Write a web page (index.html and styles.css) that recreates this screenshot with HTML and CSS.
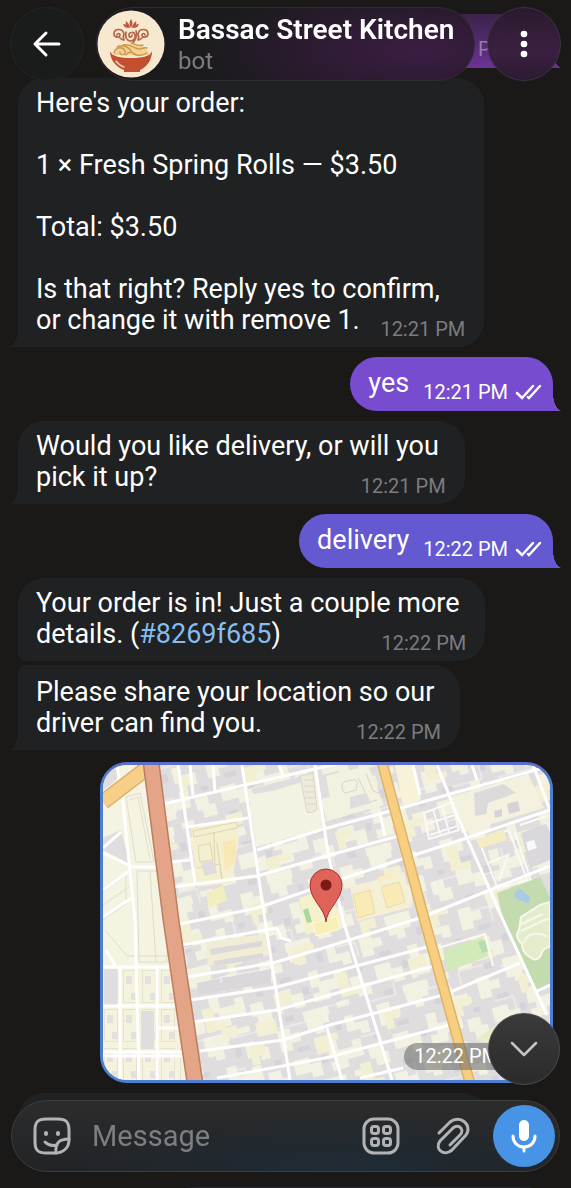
FILE: index.html
```html
<!DOCTYPE html>
<html lang="en">
  <head>
    <meta charset="UTF-8" />
    <meta name="viewport" content="width=device-width, initial-scale=1.0" />
    <title>Bassac Street Kitchen</title>
    <link rel="stylesheet" href="styles.css">
  </head>
  <body>
    <header class="top-bar">
      <button class="round-btn" type="button" aria-label="Back">
        <svg width="30" height="28" viewBox="0 0 30 28" fill="none" stroke="#fff" stroke-width="3" stroke-linecap="round" stroke-linejoin="round">
          <path d="M27 14H3M14 3L3 14l11 11" />
        </svg>
      </button>
      <div class="chat-pill">
        <svg class="avatar" viewBox="0 0 68 68" fill="none" stroke-linecap="round">
          <circle cx="34" cy="34" r="33.500" fill="#f6e9cf" />
          <!-- lotus -->
          <path d="M34 18c-2-3-2-6 0-9c2 3 2 6 0 9zM33 18c-3-1-5-3-4-7c2 2 4 4 4 7zM35 18c3-1 5-3 4-7c-2 2-4 4-4 7zM32 18c-3 0-5-1-6-4c3 0 5 2 6 4zM36 18c3 0 5-1 6-4c-3 0-5 2-6 4z" fill="#c2573a" />
          <!-- steam -->
          <g stroke="#b9654a" stroke-width="1.700">
            <path d="M27 30c-1-2-1-4 0-6c-1-6-10-6-10 0c0 4 6 4 6 1c0-2-3-2-3 0M27 30c-2 0-3-1-4-2" />
            <path d="M41 30c1-2 1-4 0-6c1-6 10-6 10 0c0 4-6 4-6 1c0-2 3-2 3 0M41 30c2 0 3-1 4-2" />
            <path d="M29 22c-1 5 0 8 4 9c4 0 6-3 5-6c-1-4-7-3-6 1c1 2 3 1 3-1M39 21c2 4 0 8-3 12" />
          </g>
          <!-- noodles -->
          <path d="M17 45c0-8 7-11 16-11s18 3 19 11z" fill="#f0d297" />
          <g stroke="#cf9849" stroke-width="1.400">
            <path d="M17 43c1-6 9-7 11-2s-6 5-5 1M20 37c6-3 12 0 15 5s10 4 15 1M26 35c8-2 12 5 17 4s5-2 7-1M34 33c4 1 8 4 12 2M29 45c3-5 8-2 11 0" />
          </g>
          <!-- bowl -->
          <path d="M13 41c2 6 11 7 21 7s19-1 21-7c0 9-5 16-12 19v2H27v-2c-8-3-14-10-14-19z" fill="#c34f31" />
          <path d="M19 51c2 3 5 5 8 6" stroke="#f0c9a6" stroke-width="1.500" />
        </svg>
        <div class="chat-name">
          <h1>Bassac Street Kitchen</h1>
          <p>bot</p>
        </div>
      </div>
      <button class="round-btn more-btn" type="button" aria-label="More options">
        <svg width="8" height="28" viewBox="0 0 8 28" fill="#fff">
          <circle cx="4" cy="4" r="3.300" /><circle cx="4" cy="14" r="3.300" /><circle cx="4" cy="24" r="3.300" />
        </svg>
      </button>
    </header>

    <main class="chat">
      <div class="bubble out tail first"><time>PM <svg class="ticks" viewBox="0 0 28 16"><path d="M2 9l5 5L18 2M13 13l1 1L25 2" /></svg></time></div>

      <div class="bubble in tail">Here's your order:<br><br>1 × Fresh Spring Rolls — $3.50<br><br>Total: $3.50<br><br>Is that right? Reply yes to confirm,<br>or change it with remove 1.&nbsp;<time>12:21 PM</time></div>

      <div class="bubble out tail violet">yes <time>12:21 PM <svg class="ticks" viewBox="0 0 28 16"><path d="M2 9l5 5L18 2M13 13l1 1L25 2" /></svg></time></div>

      <div class="bubble in tail">Would you like delivery, or will you&nbsp;<br>pick it up? <time>12:21 PM</time></div>

      <div class="bubble out tail indigo">delivery <time>12:22 PM <svg class="ticks" viewBox="0 0 28 16"><path d="M2 9l5 5L18 2M13 13l1 1L25 2" /></svg></time></div>

      <div class="bubble in">Your order is in! Just a couple more&nbsp;<br>details. (<a href="#8269f685">#8269f685</a>) <time>12:22 PM</time></div>

      <div class="bubble in tail joined">Please share your location so our&nbsp;<br>driver can find you. <time>12:22 PM</time></div>

      <div class="location">
        <svg class="map" viewBox="103 765 447 315" preserveAspectRatio="xMidYMid slice" role="img" aria-label="Shared location">
          <defs>
            <pattern id="blocks" width="103" height="71" patternUnits="userSpaceOnUse" patternTransform="rotate(-15)">
              <rect width="103" height="71" fill="#e0dddf" />
              <path d="M0 3h13v6h9v9H12v7H0zM31 0h23v7h-7v9h-9v-5h-7zM69 6h9v9h13v12h-9v-5H69zM8 36h16v7h11v14H24v-6H8zM45 25h10v12h15v-6h9v17H62v8H45v-9h7v-6h-7zM84 41h13v9h6v12H89v-8h-5zM30 62h26v9H30zM65 61h13v6H65z" fill="#f3f1e2" />
              <path d="M16 24h12v5H16zM58 9h6v9h-6zM36 38h6v8h-6zM93 31h7v5h-7zM11 62h9v6h-9z" fill="#d6d4d9" />
            </pattern>
            <pattern id="yards" width="139" height="93" patternUnits="userSpaceOnUse" patternTransform="rotate(-15)">
              <path d="M6 9h17v12H12v8H6zM72 5h11v18h9v6H72zM108 53h16v10h-8v9h-8zM34 61h24v7H47v10H34z" fill="#f3efd2" />
              <path d="M2 43h38v11M52 48v-14h26M94 40h31v-22M80 72h19v15" fill="none" stroke="#f6f5ef" />
            </pattern>
            <pattern id="lots" width="19" height="39" patternUnits="userSpaceOnUse" patternTransform="translate(101 967)">
              <rect width="19" height="39" fill="#f5f2de" />
              <path d="M6 9h6v8H6zM11 26h5v7h-5z" fill="#e4e0dd" />
              <rect x="3.500" y="3.500" width="13" height="32" fill="none" stroke="#e7e2d0" />
            </pattern>
          </defs>

          <rect x="103" y="765" width="447" height="315" fill="url(#blocks)" />
          <rect x="103" y="765" width="447" height="315" fill="url(#yards)" />

          <!-- west side -->
          <path d="M103 765h40l20 155l10 47h-70z" fill="#f5f3e2" />
          <path d="M103 967h70l17 113h-87z" fill="url(#lots)" />
          <path d="M103 838l18-8l9 34l-27-14zM104 969h13v36h-13zM141 1011h13v38h-13zM103 765h12l4 12l-10 9l-6 4z" fill="#dfddde" />
          <g fill="none" stroke="#e0ddc9">
            <path d="M126 797l14-4l14 69h-18zM130 800l8-3l12 62M103 892l23-17v29l-23 16M103 905l26-18M137 871h22l8 46v45h-28zM150 871l6 91M105 930l22 26h42" />
          </g>

          <!-- open ground and courtyards -->
          <path d="M248 789l68-17l10 55l-70 20z" fill="#f4f2e2" />
          <path d="M251 789l50-13l1 6l-30 9l-18 3z" fill="#dfdddf" />
          <path d="M300 776l13-3l4 36q-4 5-10 3z" fill="#eeebdb" stroke="#d9d5c8" />
          <path d="M304 780h9M304 786h9M305 792h9M305 798h10M306 804h10" stroke="#d9d5c8" />
          <path d="M326 776l42-10l16 39l-50 14z" fill="#f3f1e0" />
          <path d="M342 786q0-4 5-5l7-1q4 0 3 5l-1 5l-10 3q-4 0-4-7zM358 778l10 20M352 807l25-7M366 773l7 18l6 2" fill="none" stroke="#d8d4ca" />
          <path d="M350 797l16-4l5 10l-21 6z" fill="#dfdcde" />
          <path d="M395 765h18l8 35l-18 6z" fill="#f8f3d8" />
          <path d="M450 797l78-23l16 34l-82 25z" fill="#f5f1df" />
          <path d="M474 793l30-9l12 9l-28 10l-2 11l-11 2z" fill="#dddadc" />
          <path d="M494 811l8-2v7l-7 2zM507 804l11-3l2 10l-11 3z" fill="#d6d3d8" />
          <path d="M191 829l45-9l3 17l-7 46l-35 4z" fill="#f4efcf" />
          <path d="M193 831l44-9v6l-43 9zM198 846l12-3l3 17l-13 2zM214 832l1 36M197 868l23-4l2 17M217 843l5 38" fill="none" stroke="#ddd6b4" />
          <path d="M223 842l13-3v22l-11 10z" fill="#f8e8b4" />
          <path d="M201 863l12-2l4 12l-12 3z" fill="#dfdcdf" />
          <path d="M206 893l17-8l4 15l-18 8z" fill="#f3edc2" />

          <!-- housing blocks by the avenue -->
          <g fill="none" stroke="#fafaf4" stroke-width="2">
            <path d="M424 813l28-11l7 28l-30 9zM433 809l7 25M426 824l29-9M442 806l7 26M430 835l27-9" />
            <path d="M479 841l30-11l18 50l-29 9zM488 863l20-8l-9 26M515 832l17 52M520 825l27-9" />
          </g>
          <path d="M476 840l27-11l4 11l-27 8z" fill="#f5ecc4" />
          <path d="M521 833l25-9l4 8v28l-20 8z" fill="#dad7dd" />
          <path d="M526 842l8-2l3 8l-9 3z" fill="#f8f9fa" />

          <!-- yellow compounds around the pin -->
          <path d="M299 898l27-9l18 34l-38 12z" fill="#f5f1cc" />
          <path d="M350 887l54-15l8 35l-55 14z" fill="#f5f0d5" />
          <path d="M353 895l17-5l5 23l-17 5zM381 887l18-5l6 20l-18 6z" fill="#f9eab6" stroke="#e8dcb0" />
          <path d="M378 877l15-4v5l-14 4z" fill="#f8ecc0" />
          <path d="M313 923l24-7l3 13l-24 7z" fill="#f8efb6" stroke="#fffbe0" />
          <path d="M303 910l5-2l4 14l-5 1z" fill="#abd8a0" />

          <!-- long roofs -->
          <path d="M206 942l60-8l3 21l-61 11z" fill="#f0edd4" />
          <path d="M210 949l52-8v5l-51 9zM214 961l49-8v5l-48 8zM197 983l74-14v14l-73 12z" fill="#dbd8db" />
          <path d="M221 983v-6l46-8" stroke="#f4f3f2" fill="none" />
          <path d="M221 1029l15-4l3 11l-17 4zM255 1023l20-4l3 14l-20 4z" fill="#f4f0d6" />

          <!-- park -->
          <path d="M497 893l43-16l10 21v87l-15 7l-32-72z" fill="#c4dbb0" />
          <path d="M521 917l19-12l10-3v45q-8 1-9 8q-5 8-11 2q-8-4-8-13q-8-8-3-14z" fill="#e3edcb" stroke="#f7f8e8" stroke-width="2" />
          <path d="M515 893c4-6 8-3 10 0s6 1 5 7s-5 2-8 1s-9-2-7-8z" fill="#a9cbe6" />
          <path d="M519 925l24-11M521 931l28-13M524 943q2-8 10-9t13 3" stroke="#f7f8e8" stroke-width="2" fill="none" />
          <path d="M443 950l40-13l5 19l-41 16z" fill="#d2e9ba" />
          <path d="M478 942l7-2l3 11l-6 2z" fill="#b6ddae" />
          <path d="M438 948l47-14l8 32" stroke="#fafaf0" stroke-width="2" fill="none" />
          <path d="M475 1040l20-14l18 4l-15 16z" fill="#e7edc9" />

          <!-- streets -->
          <g class="street">
            <path d="M163 804l82-19l100-23M188 827l60-9M178 765l17 118M170 862l20-2M190 765l3 30M213 765l2 27" />
            <path d="M242 765l23 155l25 160M315 765l13 88l15 67l49 160M279 765l4 10" />
            <path d="M257 850l63-20l74-20l60-17l96-27" />
            <path d="M173 887l84-11l73-21l68-19" />
            <path d="M180 924l77-16l73-25l75-25l62-20l83-28" />
            <path d="M187 977l86-14l57-17l90-28l70-28l60-24" />
            <path d="M182 945l95-17M277 928l4 10l10 3" />
            <path d="M190 1000l87-13l53-14l97-26" />
            <path d="M193 1022l84-12l53-15l107-30" />
            <path d="M200 1051l83-11l47-15l113-30l77-32" />
            <path d="M217 1078l66-12l47-9l127-34M360 1078l43-10M327 1028l15 52" />
            <path d="M437 765l20 50l46 105l44 95M413 765l7 30M533 765l17 45M472 765l5 15M380 814l5 22" />
            <path d="M535 992l15-7" />
            <path d="M122 793l13 127l4 160M103 853l30 14h24M117 765l3 20M103 848l18-16M103 917l30-20M103 890l25-18M106 950l10 17" />
            <path d="M103 967h69M103 1006h75M157 1028h24M103 1052h82M103 1056h82M120 967v113M157 967v113" />
          </g>

          <!-- main roads -->
          <path d="M103 802l43-33" stroke="#dcae68" stroke-width="16" />
          <path d="M103 802l43-33" stroke="#f6cf88" stroke-width="13" />
          <path d="M151 762l20 158l24 163" fill="none" stroke="#bd7e5f" stroke-width="17" />
          <path d="M151 762l20 158l24 163" fill="none" stroke="#e3a487" stroke-width="14" />
          <path d="M382 762l42 156l46 165" fill="none" stroke="#ddb368" stroke-width="11" />
          <path d="M382 762l42 156l46 165" fill="none" stroke="#f8ce80" stroke-width="8" />

          <!-- pin -->
          <path d="M326 922c-1-14-16-22-16-37a16 16 0 0 1 32 0c0 15-15 23-16 37z" fill="#e0635a" stroke="#a8322c" />
          <circle cx="326" cy="885" r="5.500" fill="#7c1a16" />
        </svg>
        <time class="map-time">12:22 PM <svg class="ticks" viewBox="0 0 28 16"><path d="M2 9l5 5L18 2M13 13l1 1L25 2" /></svg></time>
      </div>

      <div class="bubble in last"></div>
      <div class="bubble out next"></div>
    </main>

    <button class="round-btn scroll-btn" type="button" aria-label="Scroll to bottom">
      <svg width="30" height="18" viewBox="0 0 30 18" fill="none" stroke="#c6c6c6" stroke-width="2.500" stroke-linecap="round" stroke-linejoin="round">
        <path d="M3 3l12 12L27 3" />
      </svg>
    </button>

    <form class="composer">
      <button class="icon-btn" type="button" aria-label="Stickers">
        <svg width="40" height="40" viewBox="0 0 40 40" fill="none" stroke="#b2b3b4" stroke-width="3" stroke-linecap="round" stroke-linejoin="round">
          <path d="M23 37H14C6 37 3 34 3 26V14C3 6 6 3 14 3h12c8 0 11 3 11 11v10c0 8-6 13-14 13z" />
          <path d="M24 37c-1-10 3-14 13-14M13 26c4 4 8 4 12 3" />
          <path d="M14 17v1M26 17v1" stroke-width="4" />
        </svg>
      </button>
      <input type="text" placeholder="Message" aria-label="Message">
      <button class="icon-btn" type="button" aria-label="Bot commands">
        <svg width="40" height="40" viewBox="0 0 40 40" fill="none" stroke="#b2b3b4" stroke-width="3">
          <rect x="3" y="3" width="34" height="34" rx="10" />
          <rect x="10.500" y="10.500" width="7" height="7" rx="2.500" /><rect x="22.500" y="10.500" width="7" height="7" rx="2.500" />
          <rect x="10.500" y="22.500" width="7" height="7" rx="2.500" /><rect x="22.500" y="22.500" width="7" height="7" rx="2.500" />
        </svg>
      </button>
      <button class="icon-btn" type="button" aria-label="Attach">
        <svg width="40" height="40" viewBox="0 0 40 40" fill="none" stroke="#b2b3b4" stroke-width="3" stroke-linecap="round">
          <path d="M6 17L17 6C27-2 40 9 33 19L19 34C11 41 1 33 7 25L20 12C26 7 32 14 27 19L17 29" />
        </svg>
      </button>
      <button class="mic-btn" type="button" aria-label="Record voice message">
        <svg width="26" height="34" viewBox="0 0 26 34" fill="none" stroke="#fff" stroke-width="3" stroke-linecap="round">
          <rect x="8" y="1" width="10" height="21" rx="5" fill="#fff" stroke="none" />
          <path d="M2 17c0 7 5 11 11 11s11-4 11-11M13 28v4" />
        </svg>
      </button>
    </form>
  </body>
</html>
```

FILE: styles.css
```css
* {
  box-sizing: border-box;
}
body {
  margin: 0;
  height: 100vh;
  overflow: hidden;
  background: #1a1917;
  color: #fff;
  font-family: Roboto, "Liberation Sans", sans-serif;
}
button {
  padding: 0;
  border: none;
  background: none;
  cursor: pointer;
}
svg {
  display: block;
}

/* ------------ header ------------ */
.top-bar {
  position: fixed;
  z-index: 2;
  top: 0;
  left: 0;
  right: 0;
  display: flex;
  gap: 12px;
  padding: 7px 10px 0;
}
.round-btn {
  display: flex;
  flex: none;
  align-items: center;
  justify-content: center;
  width: 74px;
  height: 74px;
  border: 1px solid #242526;
  border-radius: 50%;
  background: #1a1b1b;
}
.chat-pill {
  display: flex;
  flex: 1;
  align-items: center;
  gap: 13px;
  min-width: 0;
  height: 74px;
  border: 1px solid #302c33;
  border-radius: 37px;
  background: radial-gradient(ellipse 220px 70px at 85% 60%, #3b1d43, #2c1b31 50%, #1b1b1d);
}
.avatar {
  flex: none;
  width: 68px;
  height: 68px;
}
.chat-name h1,
.chat-name p {
  margin: 0;
  white-space: nowrap;
}
.chat-name h1 {
  font-size: 28px;
  font-weight: 600;
  line-height: 34px;
}
.chat-name p {
  color: #7d7c80;
  font-size: 24px;
  line-height: 28px;
}
.more-btn {
  border-color: #40304a;
  background: linear-gradient(#2b1a2e, #3a2041 60%, #2b1b30);
}

/* ------------ messages ------------ */
.chat {
  display: flex;
  flex-direction: column;
  align-items: flex-start;
  gap: 10px;
  height: 100%;
  padding: 14px 18px 0;
  overflow: hidden;
}
.bubble {
  --fill: #202123;
  position: relative;
  flex: none;
  padding: 10px 19px 6px 18px;
  border-radius: 26px;
  background: var(--fill);
  font-size: 27px;
  line-height: 31px;
}
.bubble a {
  color: #85bdf0;
  text-decoration: none;
}
.bubble time {
  float: right;
  margin: 12px 0 0 14px;
  color: #7b7c7e;
  font-size: 20px;
  line-height: 24px;
}
.out {
  align-self: flex-end;
  padding: 11px 10px 7px 18px;
  border-radius: 27px;
}
.bubble.out time,
.map-time {
  display: flex;
  align-items: center;
  gap: 7px;
  color: #fff;
}
.ticks {
  width: 28px;
  height: 16px;
  fill: none;
  stroke: #fff;
  stroke-width: 2.5;
  stroke-linecap: round;
}
.first {
  --fill: linear-gradient(#3a2348, #6c3296);
  min-width: 120px;
}
.bubble.first time {
  color: #9a7ba8;
}
.violet {
  --fill: #774ccf;
}
.indigo {
  --fill: #6459d1;
}
/* little horn at the bottom corner */
.tail::after {
  content: "";
  position: absolute;
  bottom: 0;
  width: 9px;
  height: 18px;
  background: var(--fill);
}
.in.tail {
  border-bottom-left-radius: 0;
}
.in.tail::after {
  right: 100%;
  mask: radial-gradient(ellipse 9px 18px at 0 0, transparent 98%, #000);
}
.out.tail {
  border-bottom-right-radius: 0;
}
.out.tail::after {
  left: 100%;
  mask: radial-gradient(ellipse 9px 18px at 100% 0, transparent 98%, #000);
}
.in:has(+ .joined) {
  border-bottom-left-radius: 8px;
}
.joined {
  margin-top: -6px;
  padding-top: 12px;
  border-top-left-radius: 8px;
}

/* ------------ location ------------ */
.location {
  position: relative;
  flex: none;
  align-self: flex-end;
  width: calc(100% - 82px);
  margin-top: 2px;
  border: 3px solid #4c7fd2;
  border-top-color: #5b6fcb;
  border-radius: 27px;
  background: #4c7fd2;
}
.map {
  width: 100%;
  border-radius: 24px;
}
.street {
  fill: none;
  stroke: #fff;
  stroke-width: 3;
  stroke-linejoin: round;
}
.map-time {
  position: absolute;
  right: 6px;
  bottom: 10px;
  padding: 0 10px;
  border-radius: 14px;
  background: rgba(100, 100, 100, 0.55);
  font-size: 20px;
  line-height: 27px;
}
.last {
  width: 88%;
  height: 78px;
}
.next {
  width: 72%;
  height: 54px;
  margin-top: 6px;
  background: #23263a;
}

/* ------------ bottom ------------ */
.scroll-btn {
  position: fixed;
  z-index: 2;
  right: 11px;
  bottom: 103px;
  width: 72px;
  height: 72px;
  border-color: #4b4c4b;
  background: linear-gradient(#393a39, #2a2b2a);
}
.composer {
  position: fixed;
  z-index: 1;
  left: 11px;
  right: 11px;
  bottom: 16px;
  display: flex;
  align-items: center;
  height: 72px;
  padding: 0 4px 0 20px;
  border: 1px solid #3c3d3d;
  border-radius: 36px;
  background: radial-gradient(ellipse 280px 60px at 60% 100%, #1f2c36, transparent), linear-gradient(#2c2c2c, #212326);
}
.composer input {
  flex: 1;
  min-width: 0;
  padding: 0 20px;
  border: none;
  outline: none;
  background: none;
  color: #fff;
  font: 29px/32px Roboto, "Liberation Sans", sans-serif;
}
.composer input::placeholder {
  color: #7d7e80;
  opacity: 1;
}
.icon-btn {
  flex: none;
}
.icon-btn + .icon-btn {
  margin-left: 32px;
}
.mic-btn {
  display: flex;
  flex: none;
  align-items: center;
  justify-content: center;
  width: 62px;
  height: 62px;
  margin-left: 20px;
  border-radius: 50%;
  background: #4793e6;
}
```
